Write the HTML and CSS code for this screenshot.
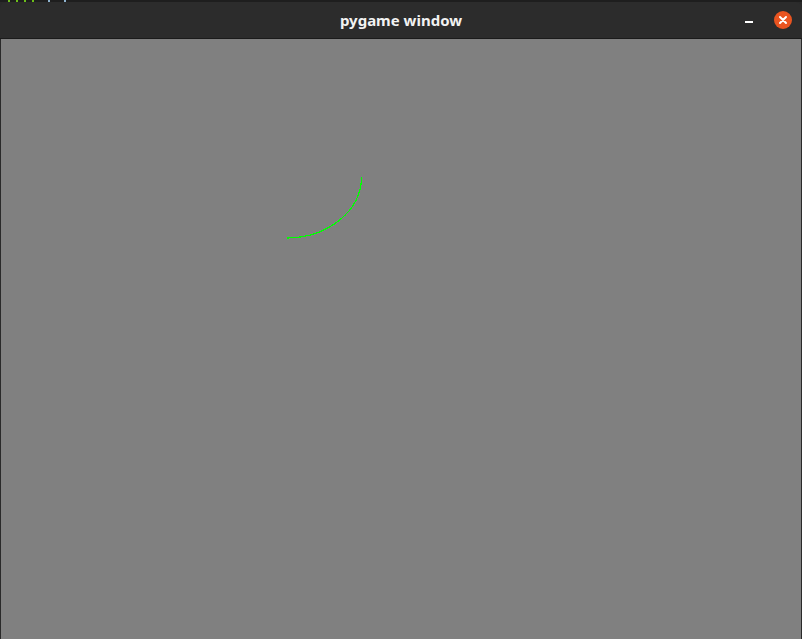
FILE: index.html
```html
<!DOCTYPE html>
<html>
<head>
<meta charset="utf-8">
<link rel="stylesheet" href="styles.css">
</head>
<body>
<div class="desk">
  <span class="dot"></span><span class="dot"></span><span class="dot"></span><span class="dot"></span><span class="dot blue"></span><span class="dot blue"></span>
</div>
<div class="window">
  <div class="titlebar">
    <span class="title">pygame window</span>
    <div class="controls">
      <span class="min"></span>
      <span class="close">
        <svg width="18" height="18" viewBox="0 0 18 18"><path d="M6 6 L12 12 M12 6 L6 12" stroke="#fff" stroke-width="2" stroke-linecap="round"/></svg>
      </span>
    </div>
  </div>
  <div class="canvas">
    <svg class="draw" width="800" height="600" viewBox="0 0 800 600" shape-rendering="crispEdges">
      <path d="M 360.5 138 A 75 61 0 0 1 285.5 199" fill="none" stroke="#00ff00" stroke-width="1.2"/>
    </svg>
  </div>
</div>
</body>
</html>
```
FILE: styles.css
```css
html, body { margin: 0; padding: 0; }
body { background: #2a2a2a; width: 802px; height: 639px; overflow: hidden; font-family: "Noto Sans", "Open Sans", sans-serif; }
.desk { height: 2px; background: #1e1e1e; display: flex; gap: 6px; padding-left: 8px; }
.dot { width: 2px; height: 2px; background: #6cbf1a; }
.dot.blue { background: #8fb4d0; margin-left: 8px; }
.window { display: flex; flex-direction: column; height: 637px; }
.titlebar {
  height: 36px; background: #2c2c2c; border-radius: 6px 6px 0 0;
  border-bottom: 1px solid #1b1b1b;
  display: flex; align-items: center; justify-content: center; position: relative;
}
.title { color: #f2f2f2; font-weight: bold; font-size: 15px; margin-top: -1px; }
.controls { position: absolute; right: 10px; top: 9px; display: flex; align-items: center; gap: 21px; }
.min { width: 8px; height: 2px; background: #fff; margin-top: 4px; }
.close { width: 18px; height: 18px; border-radius: 50%; background: #e95420; display: flex; }
.canvas { flex: 1; background: #808080; border-left: 1px solid #2a2a2a; border-right: 1px solid #2a2a2a; }
.draw { display: block; }
```
